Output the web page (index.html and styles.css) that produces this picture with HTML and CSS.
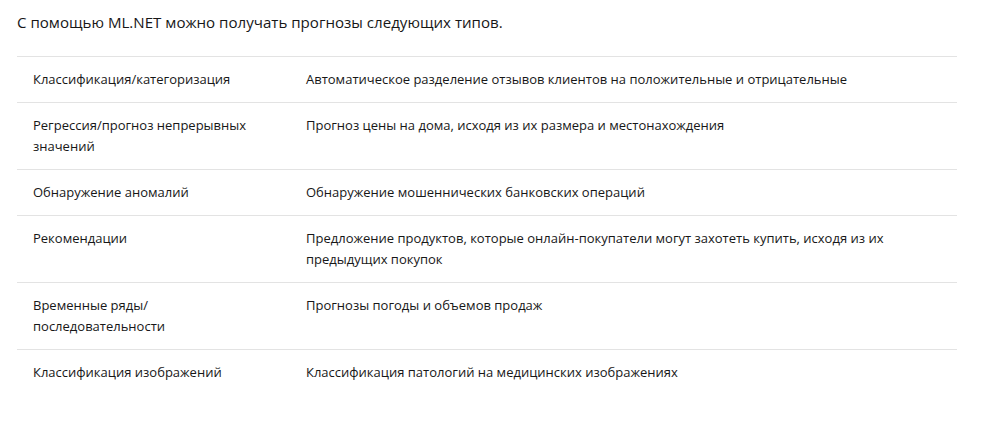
FILE: index.html
```html
<!DOCTYPE html>
<html lang="ru">
<head>
<meta charset="utf-8">
<link rel="stylesheet" href="styles.css">
</head>
<body>
<main class="content">
  <p class="intro">С помощью ML.NET можно получать прогнозы следующих типов.</p>
  <table class="types">
    <tbody>
      <tr><td class="kind">Классификация/категоризация</td><td>Автоматическое разделение отзывов клиентов на положительные и отрицательные</td></tr>
      <tr><td class="kind">Регрессия/прогноз непрерывных значений</td><td>Прогноз цены на дома, исходя из их размера и местонахождения</td></tr>
      <tr><td class="kind">Обнаружение аномалий</td><td>Обнаружение мошеннических банковских операций</td></tr>
      <tr><td class="kind">Рекомендации</td><td>Предложение продуктов, которые онлайн-покупатели могут захотеть купить, исходя из их предыдущих покупок</td></tr>
      <tr><td class="kind">Временные ряды/последовательности</td><td>Прогнозы погоды и объемов продаж</td></tr>
      <tr><td class="kind">Классификация изображений</td><td>Классификация патологий на медицинских изображениях</td></tr>
    </tbody>
  </table>
</main>
</body>
</html>
```
FILE: styles.css
```css
html, body {
  margin: 0;
  padding: 0;
  background: #ffffff;
}
.content {
  padding: 0 45px 0 17px;
  font-family: "Open Sans", "Noto Sans", sans-serif;
  color: #171717;
}
.intro {
  margin: 0;
  padding-top: 10px;
  font-size: 15.1px;
  line-height: 24px;
}
.types {
  margin-top: 22px;
  width: 940px;
  border-collapse: collapse;
  font-size: 13px;
  line-height: 21px;
}
.types td {
  border-top: 1px solid #e3e3e3;
  padding: 12px 16px;
  vertical-align: top;
}
.types td.kind {
  width: 241px;
}
```
